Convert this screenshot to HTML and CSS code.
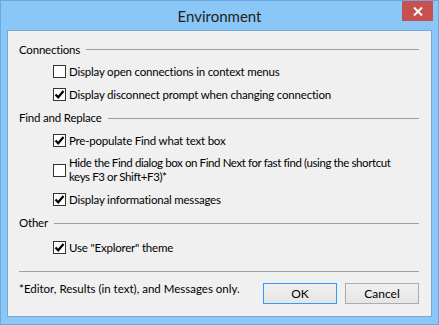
FILE: index.html
```html
<!DOCTYPE html>
<html>
<head>
<meta charset="utf-8">
<link rel="stylesheet" href="styles.css">
</head>
<body>
<div class="window">
  <div class="titlebar">
    <span class="title">Environment</span>
    <div class="close"><svg width="10" height="9" viewBox="0 0 10 9"><path d="M1 0.5 L9 8.5 M9 0.5 L1 8.5" stroke="#fff" stroke-width="2"/></svg></div>
  </div>
  <div class="client">
    <div class="heading"><span>Connections</span><div class="rule"></div></div>
    <div class="row"><span class="box"></span><span class="label">Display open connections in context menus</span></div>
    <div class="row"><span class="box checked"><svg width="11" height="11" viewBox="0 0 11 11"><path d="M1.5 5.5 L4.2 8.3 L9.5 2" fill="none" stroke="#000" stroke-width="2.2"/></svg></span><span class="label">Display disconnect prompt when changing connection</span></div>
    <div class="heading"><span>Find and Replace</span><div class="rule"></div></div>
    <div class="row"><span class="box checked"><svg width="11" height="11" viewBox="0 0 11 11"><path d="M1.5 5.5 L4.2 8.3 L9.5 2" fill="none" stroke="#000" stroke-width="2.2"/></svg></span><span class="label">Pre-populate Find what text box</span></div>
    <div class="row tall"><span class="box"></span><span class="label long">Hide the Find dialog box on Find Next for fast find (using the shortcut<br>keys F3 or Shift+F3)*</span></div>
    <div class="row"><span class="box checked"><svg width="11" height="11" viewBox="0 0 11 11"><path d="M1.5 5.5 L4.2 8.3 L9.5 2" fill="none" stroke="#000" stroke-width="2.2"/></svg></span><span class="label">Display informational messages</span></div>
    <div class="heading"><span>Other</span><div class="rule"></div></div>
    <div class="row explorer"><span class="box checked"><svg width="11" height="11" viewBox="0 0 11 11"><path d="M1.5 5.5 L4.2 8.3 L9.5 2" fill="none" stroke="#000" stroke-width="2.2"/></svg></span><span class="label">Use "Explorer" theme</span></div>
    <div class="separator"></div>
    <div class="footer">
      <span class="note">*Editor, Results (in text), and Messages only.</span>
      <div class="buttons">
        <button class="btn default">OK</button>
        <button class="btn">Cancel</button>
      </div>
    </div>
  </div>
</div>
</body>
</html>
```

FILE: styles.css
```css
html, body {
  margin: 0;
  padding: 0;
  background: #8ac6f6;
}
body {
  width: 439px;
  height: 325px;
  overflow: hidden;
  font-family: Lato, "Noto Sans", sans-serif;
  font-size: 11.5px;
  letter-spacing: -0.2px;
  color: #000;
}
.window {
  box-sizing: border-box;
  width: 439px;
  height: 325px;
  background: #8ac6f6;
  border: 1px solid #6aa8de;
  padding: 0 6px 7px 6px;
  display: flex;
  flex-direction: column;
}
.titlebar {
  height: 29px;
  position: relative;
  display: flex;
  align-items: center;
  justify-content: center;
}
.title {
  font-size: 15px;
  letter-spacing: 0;
  color: #1e1e1e;
  margin-top: 1px;
}
.close {
  position: absolute;
  right: -1px;
  top: 0;
  width: 31px;
  height: 20px;
  background: #c75050;
  display: flex;
  align-items: center;
  justify-content: center;
}
.client {
  box-sizing: border-box;
  height: 287px;
  background: #f0f0f0;
  border: 1px solid #72a9d8;
  padding: 7px 12px 0 11px;
  display: flex;
  flex-direction: column;
}
.heading {
  height: 22px;
  display: flex;
  align-items: center;
  white-space: nowrap;
}
.rule {
  flex: 1;
  height: 0;
  border-top: 1px solid #a0a0a0;
  margin-left: 6px;
  margin-top: 1px;
}
.row {
  height: 23px;
  display: flex;
  align-items: center;
  padding-left: 34px;
}
.row + .heading {
  height: 23px;
}
.row.tall {
  height: 36px;
}
.row.tall .label {
  line-height: 14px;
}
.label.long {
  letter-spacing: -0.4px;
}
.row.explorer {
  margin-top: 2px;
}
.box {
  box-sizing: border-box;
  width: 13px;
  height: 13px;
  border: 1px solid #333;
  background: #fff;
  flex: none;
  display: flex;
  align-items: center;
  justify-content: center;
  margin-right: 3px;
}
.label {
  white-space: nowrap;
}
.separator {
  margin-top: 12px;
  border-top: 1px solid #a0a0a0;
  height: 0;
}
.footer {
  display: flex;
  justify-content: space-between;
  align-items: flex-start;
  margin-top: 11px;
}
.note {
  white-space: nowrap;
  letter-spacing: 0;
  margin-top: -1px;
}
.buttons {
  display: flex;
  gap: 8px;
}
.btn {
  box-sizing: border-box;
  width: 74px;
  height: 21px;
  border: 1px solid #acacac;
  background: linear-gradient(#f0f0f0, #e5e5e5);
  font-family: inherit;
  font-size: 12px;
  letter-spacing: 0;
  color: #000;
  padding: 0;
  line-height: 18px;
}
.btn.default {
  border-color: #3399ff;
}
```
